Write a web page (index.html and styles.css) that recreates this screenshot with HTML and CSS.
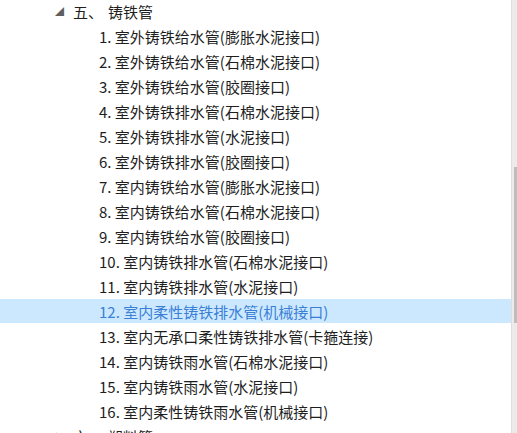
FILE: index.html
```html
<!DOCTYPE html>
<html lang="zh-CN">
<head>
  <meta charset="UTF-8" />
  <title>铸铁管</title>
  <link rel="stylesheet" href="styles.css">
</head>
<body>
  <div class="frame">
    <ul class="tree">
      <li class="node open">
        <span class="arrow">&#9698;</span>
        <span class="num">五、</span>
        <span class="label">铸铁管</span>
      </li>
      <li class="leaf">1. 室外铸铁给水管(膨胀水泥接口)</li>
      <li class="leaf">2. 室外铸铁给水管(石棉水泥接口)</li>
      <li class="leaf">3. 室外铸铁给水管(胶圈接口)</li>
      <li class="leaf">4. 室外铸铁排水管(石棉水泥接口)</li>
      <li class="leaf">5. 室外铸铁排水管(水泥接口)</li>
      <li class="leaf">6. 室外铸铁排水管(胶圈接口)</li>
      <li class="leaf">7. 室内铸铁给水管(膨胀水泥接口)</li>
      <li class="leaf">8. 室内铸铁给水管(石棉水泥接口)</li>
      <li class="leaf">9. 室内铸铁给水管(胶圈接口)</li>
      <li class="leaf">10. 室内铸铁排水管(石棉水泥接口)</li>
      <li class="leaf">11. 室内铸铁排水管(水泥接口)</li>
      <li class="leaf selected">12. 室内柔性铸铁排水管(机械接口)</li>
      <li class="leaf">13. 室内无承口柔性铸铁排水管(卡箍连接)</li>
      <li class="leaf">14. 室内铸铁雨水管(石棉水泥接口)</li>
      <li class="leaf">15. 室内铸铁雨水管(水泥接口)</li>
      <li class="leaf">16. 室内柔性铸铁雨水管(机械接口)</li>
      <li class="node">
        <span class="arrow closed">&#9655;</span>
        <span class="num">六、</span>
        <span class="label">塑料管</span>
      </li>
    </ul>
    <div class="scrollbar">
      <div class="thumb"></div>
    </div>
  </div>
</body>
</html>
```

FILE: styles.css
```css
body {
  margin: 0;
  background: #fff;
  font-family: "Noto Sans CJK SC", "Noto Sans", sans-serif;
  overflow: hidden;
}
.frame {
  display: flex;
  height: 433px;
}
.tree {
  list-style: none;
  margin: -1px 0 0 0;
  padding: 0;
  flex: 1;
}
.tree li {
  height: 25px;
  display: flex;
  align-items: center;
  font-size: 15px;
  color: #1e1e1e;
  white-space: nowrap;
}
.leaf {
  padding-left: 99px;
}
.leaf.selected {
  background: #cce8ff;
  color: #3a7fd5;
  height: 24px;
  margin-bottom: 1px;
}
.node {
  padding-left: 55px;
}
.arrow {
  width: 18px;
  font-size: 9px;
  color: #5f5f5f;
}
.arrow.closed {
  font-size: 10px;
  color: #8a8a8a;
}
.num {
  width: 35px;
}
.scrollbar {
  width: 5px;
  background: #ebebeb;
  border-left: 1px solid #dedede;
  position: relative;
}
.thumb {
  position: absolute;
  top: 167px;
  left: 2px;
  width: 3px;
  height: 156px;
  background: #bdbdbd;
}
```
